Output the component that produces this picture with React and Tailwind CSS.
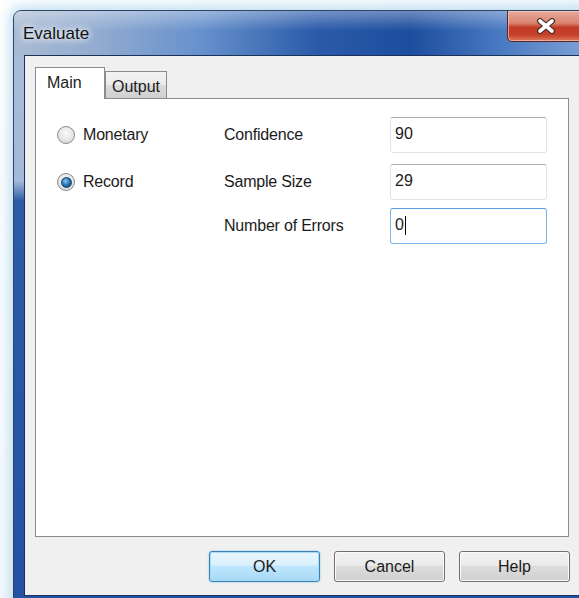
import React from 'react';

const font = "font-['Liberation_Sans',Arial,sans-serif]";

function Radio({ checked, label }) {
  return (
    <div className="flex items-center gap-[8px]">
      <span className="w-[18px] h-[18px] rounded-full border border-[#8c8c8c] bg-[radial-gradient(circle_at_50%_40%,#fbfbfb_0%,#e6e6e6_55%,#cfcfcf_100%)] flex items-center justify-center">
        {checked && (
          <span className="w-[11px] h-[11px] rounded-full border border-[#173a60] bg-[radial-gradient(circle_at_40%_35%,#8fcdf0_0%,#2a7cbd_45%,#0d3867_100%)]" />
        )}
      </span>
      <span className="text-[16px] text-[#1b1b1b] tracking-[-0.2px]">{label}</span>
    </div>
  );
}

function Field({ value, focused, caret }) {
  return (
    <div
      className={
        focused
          ? 'w-[157px] h-full rounded-[3px] border border-[#7eb4ea] border-t-[#569de5] bg-white flex items-center pl-[4px]'
          : 'w-[157px] h-full rounded-[3px] border border-[#e2e3ea] border-t-[#abadb3] bg-white flex items-center pl-[4px]'
      }
    >
      <span className="text-[16px] text-[#1b1b1b] leading-[18px] -mt-[3px]">{value}</span>
      {caret && <span className="w-px h-[19px] bg-black ml-[1px] -mt-[1px]" />}
    </div>
  );
}

function Button({ children, primary }) {
  return (
    <button
      className={
        primary
          ? 'w-[111px] h-[31px] rounded-[3px] border border-[#3c7fb1] shadow-[inset_0_0_0_1px_#a6dcf7,0_0_2px_#7cc4ec] bg-[linear-gradient(to_bottom,#eaf6fd_0%,#d9f0fc_45%,#bee6fd_50%,#a7d9f5_100%)] text-[16px] text-[#1b1b1b]'
          : 'w-[111px] h-[31px] rounded-[3px] border border-[#707070] shadow-[inset_0_0_0_1px_#fbfbfb] bg-[linear-gradient(to_bottom,#f2f2f2_0%,#ebebeb_45%,#dddddd_50%,#cfcfcf_100%)] text-[16px] text-[#1b1b1b]'
      }
    >
      {children}
    </button>
  );
}

export default function App() {
  return (
    <div className={`w-[579px] h-[598px] overflow-hidden bg-[linear-gradient(135deg,#ffffff_0%,#f3f9fd_60%,#eaf4fa_100%)] pl-[13px] pt-[10px] ${font}`}>
      {/* window frame */}
      <div className="w-[585px] h-[600px] rounded-t-[8px] border border-[#2e4464] shadow-[0_0_12px_4px_rgba(150,200,230,0.55)] bg-[linear-gradient(to_bottom,#a9bedb_0px,#a3b9d9_170px,#2d5ba9_190px,#2352a5_100%)]">
        {/* title bar */}
        <div className="h-[44px] rounded-t-[7px] flex justify-between items-start bg-[linear-gradient(to_bottom,rgba(255,255,255,0.35)_0%,rgba(255,255,255,0)_45%),linear-gradient(90deg,#a9bbd3_0%,#93acd0_14%,#6791cc_32%,#2a5aa9_52%,#1d4d9e_68%,#4a7bc2_84%,#84a5d6_100%)]">
          <span className="pl-[9px] pt-[10px] text-[17px] text-[#111] [text-shadow:0_0_6px_#fff,0_0_10px_#fff]">Evaluate</span>
          <div className="mr-[13px] w-[77px] h-[31px] rounded-b-[5px] border border-t-0 border-[#5a2520] shadow-[inset_0_0_0_1px_rgba(255,210,200,0.6)] bg-[linear-gradient(to_bottom,#e7aa9c_0%,#d98471_40%,#c23b26_55%,#c5402b_80%,#dc7a5c_100%)] flex items-center justify-center">
            <svg width="22" height="16" viewBox="0 0 22 16">
              <g strokeLinecap="round">
                <path d="M5 3 L17 13 M17 3 L5 13" stroke="#4a2a26" strokeWidth="6" />
                <path d="M5 3 L17 13 M17 3 L5 13" stroke="#ffffff" strokeWidth="3.6" />
              </g>
            </svg>
          </div>
        </div>

        {/* client area */}
        <div className="ml-[10px] w-[563px] h-[541px] border border-[#1c3158] bg-[#f0f0f0] pl-[10px] pt-[11px]">
          {/* tabs */}
          <div className="flex items-end h-[32px] -mb-px relative z-10">
            <div className="w-[70px] h-[32px] border border-b-0 border-[#898c95] bg-white pl-[11px] pt-[3px] text-[16px] text-[#1b1b1b]">
              Main
            </div>
            <div className="w-[62px] h-[27px] mb-px border border-b-0 border-[#898c95] bg-[linear-gradient(to_bottom,#f3f3f3_0%,#ebebeb_50%,#dcdcdc_51%,#cfcfcf_100%)] pl-[6px] pt-[3px] text-[16px] text-[#1b1b1b]">
              Output
            </div>
          </div>

          {/* tab page */}
          <div className="w-[534px] h-[439px] border border-[#898c95] bg-white pl-[21px] pt-[18px]">
            <div className="flex h-[36px] items-center">
              <div className="w-[167px]">
                <Radio label="Monetary" />
              </div>
              <span className="w-[166px] text-[16px] text-[#1b1b1b] tracking-[-0.2px]">Confidence</span>
              <Field value="90" />
            </div>
            <div className="flex h-[36px] items-center mt-[11px]">
              <div className="w-[167px]">
                <Radio checked label="Record" />
              </div>
              <span className="w-[166px] text-[16px] text-[#1b1b1b] tracking-[-0.2px]">Sample Size</span>
              <Field value="29" />
            </div>
            <div className="flex h-[36px] items-center mt-[8px]">
              <div className="w-[167px]" />
              <span className="w-[166px] text-[16px] text-[#1b1b1b] tracking-[-0.2px]">Number of Errors</span>
              <Field value="0" focused caret />
            </div>
          </div>

          {/* dialog buttons */}
          <div className="w-[535px] mt-[14px] flex justify-end gap-[14px]">
            <Button primary>OK</Button>
            <Button>Cancel</Button>
            <Button>Help</Button>
          </div>
        </div>
      </div>
    </div>
  );
}
